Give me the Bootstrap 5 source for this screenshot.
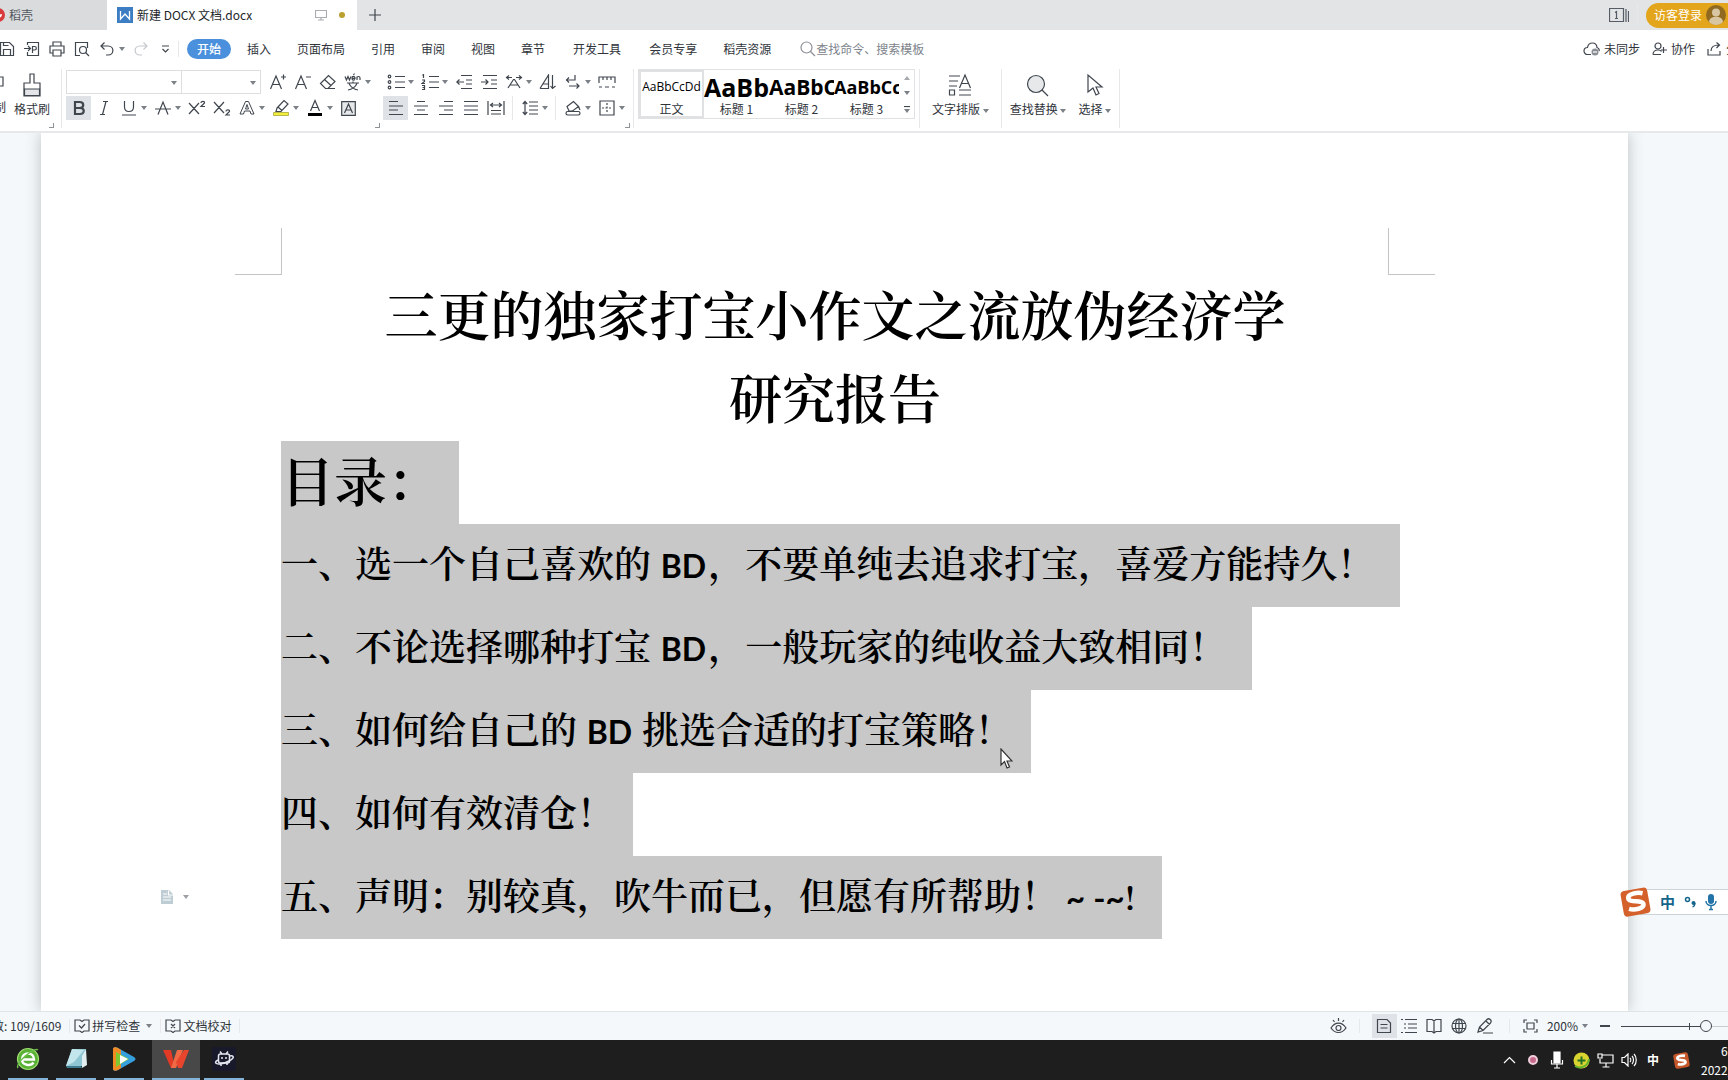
<!DOCTYPE html>
<html lang="zh-CN">
<head>
<meta charset="utf-8">
<meta name="viewport" content="width=device-width, initial-scale=1">
<title>新建 DOCX 文档.docx</title>
<link rel="stylesheet" href="https://cdn.jsdelivr.net/npm/bootstrap@5.3.0/dist/css/bootstrap.min.css">
<style>
body{font-family:"Noto Sans CJK SC",sans-serif;font-size:12px;line-height:18px;color:#2f343b;background:#f4f8fa}
svg{display:block;flex:none;fill:none;stroke:#40464e;stroke-width:1.2}
button{border:0;background:none;padding:0;color:inherit;flex:none}
a{color:inherit;text-decoration:none}
.tabstrip{height:30px;background:#e2e4e6}
.tab-home{width:107px;background:#d9dbdd;color:#53585f}
.tab-home svg{margin-left:-9px}
.tab-doc{width:250px;background:#fff;color:#22262b}
.dot-edit{width:6px;height:6px;background:#b9a02f;margin:0 12px}
.login{height:25px;background:#e3a51c;color:#fff;border-radius:13px 0 0 13px;width:82px}
.menurow{height:38px;background:#fff}
.quick{margin-left:-6px}
.menurow a{padding:0 13px;white-space:nowrap}
.menurow a.wide-link{padding:0 15px}
.menurow a.on{background:#4a90dc;color:#fff;border-radius:10px;padding:1px 10px;margin:0 3px 0 8px;font-weight:500}
.seek{border:0;outline:0;width:120px;padding:0;color:#7d838b;background:none}
.seek::placeholder{color:#7d838b;opacity:1}
.share{width:21px;overflow:hidden;white-space:nowrap}
.ic{width:25px;height:24px;display:flex;align-items:center;justify-content:center}
.ic.on{background:#dfe2e6}
.cr{width:9px;height:24px;display:flex;align-items:center}
.cr::after,.car::after{content:"";border:3px solid transparent;border-top:4px solid #7c8187;border-bottom:0}
.car{display:inline-flex;align-items:center;vertical-align:middle}
.vr1{width:1px;align-self:stretch;background:#e6e8ea;flex:none}
.ribbon{height:65px;background:#fff;border-bottom:2px solid #e6e8ea;padding:1px 0 3px}
.ribbon select{appearance:none;border:1px solid #dcdee0;background:#fff;height:24px;border-radius:0;padding:0;flex:none}
.ribbon .w-font{width:116px}
.ribbon .w-size{width:79px;border-left:0}
.pick{position:relative}
.pick::after{content:"";position:absolute;right:5px;top:11px;border:3px solid transparent;border-top:4px solid #7c8187;border-bottom:0;pointer-events:none}
.g-clip{width:57px}.g-font{width:321px}.g-para{width:250px}
.icon-row{padding:1px 0 2px}
.corner{position:absolute;right:3px;bottom:0;width:5px;height:5px;border:solid #8f9499;border-width:0 1px 1px 0}
.cutcol{width:6px;display:flex;flex-direction:column;align-items:flex-end;gap:9px;padding-top:6px;white-space:nowrap}
.gallery{border:1px solid #dfe1e3;height:50px;width:277px}
.sty{width:65px;height:48px;overflow:hidden;white-space:nowrap;display:flex;flex-direction:column;align-items:center;justify-content:flex-end}
.sty.on{box-shadow:inset 0 0 0 2px #dfe1e3}
.sty b,.sty i{font-style:normal;color:#000;align-self:stretch;overflow:hidden;text-align:left;line-height:26px;font-family:"Open Sans","Noto Sans",sans-serif}
.sty i{text-align:center}
.h-a{font-size:25px}.h-b{font-size:21px}.h-c{font-size:18px}
.big{display:flex;flex-direction:column;align-items:center;gap:3px;white-space:nowrap}
.workarea{min-height:0;overflow:hidden;position:relative}
.sheet{background:#fff;margin:0 100px 0 41px;height:100%;padding-top:95px;box-shadow:0 0 14px rgba(60,70,80,.3)}
.marks{padding:0 193px 0 194px}
.mk{width:47px;height:47px;border:solid #c2c4c6;border-width:0 1px 1px 0}
.mk.r{border-width:0 0 1px 1px}
.doc-text{padding:0 239px 0 240px;color:#000;font-family:"Noto Serif CJK SC","Noto Sans CJK SC",serif;font-size:37px;font-weight:600}
.doc-text h1{font-size:53px;line-height:83px;margin:-3px 0 3px;font-weight:600}
.doc-text h2{font-size:53px;margin:0;font-weight:600}
.doc-text p{margin:0}
.doc-text .sel{background:#c8c8c8;width:fit-content;padding:0 19px 6px 0;line-height:77px;white-space:nowrap}
.doc-text p.long{padding-right:26px}
.lat{font-family:Lato,sans-serif;font-size:32px;line-height:1;font-weight:700;margin:0 2px}
.tilde{font-family:Lato,sans-serif;font-size:33px;line-height:1;font-weight:700;margin-left:8px}
.bang{font-size:33px;line-height:1}
.para-tip{position:absolute;left:160px;top:756px;display:flex;gap:9px;opacity:.75}
.pointer{position:absolute;left:1000px;top:615px}
.ime{position:absolute;right:0;top:756px;height:26px;width:88px;background:#fff;border:solid #ccd4da;border-width:1px 0}
.ime svg.logo{margin-left:-20px}
.ime b{color:#17658a;font-size:15px}
.statusbar{height:29px;background:#f4f8fa;border-top:1px solid #dfe4e7}
.statusbar .vr1{height:14px;align-self:center}
.words{margin-left:-8px;white-space:nowrap}
.chk{display:flex;align-items:center;gap:2px}
.zoomer{appearance:none;width:140px;height:16px;margin:0 -33px 0 0;background:linear-gradient(#40464e,#40464e) 68px 5px/1px 7px no-repeat,linear-gradient(90deg,#40464e 80px,#c8ccd0 80px) 0 8px/100% 1px no-repeat;flex:none}
.zoomer::-webkit-slider-thumb{appearance:none;width:12px;height:12px;border:1px solid #40464e;border-radius:50%;background:#f4f8fa}
.taskbar{height:40px;background:#1e1e1e;color:#fff}
.app{width:40px;height:40px;border-bottom:2px solid #84b4d8;display:flex;align-items:center;justify-content:center}
.app.on{width:48px;background:#484848}
.tray .ic{width:24px}
.taskbar .tray svg{stroke:#fff}
.clock{width:27px;white-space:nowrap;line-height:19px}
</style>
<script src="https://cdn.jsdelivr.net/npm/bootstrap@5.3.0/dist/js/bootstrap.bundle.min.js"></script>
</head>
<body class="vh-100 d-flex flex-column overflow-hidden">

<header class="flex-shrink-0">
  <div class="tabstrip d-flex align-items-stretch">
    <div class="tab-home d-flex align-items-center overflow-hidden">
      <svg width="14" height="14" viewBox="0 0 14 14"><circle cx="7" cy="7" r="7" fill="#d8393c" stroke="none"/><path d="M7 10c3 0 4-2 4-4-2 0-3 1-4 4z" fill="#fff" stroke="none"/></svg>
      <span class="ms-1">稻壳</span>
    </div>
    <div class="tab-doc d-flex align-items-center">
      <svg class="ms-2 me-1" width="18" height="16" viewBox="0 0 18 16"><path d="M2 0h16v16H2z" fill="#3d7dc4" stroke="none"/><path d="M5.500 4v8l4.500-5 4.500 5V4" stroke="#fff" stroke-width="1.300"/></svg>
      <span>新建 DOCX 文档.docx</span>
      <svg class="ms-auto" width="12" height="12" viewBox="0 0 12 12" stroke-width="1"><path d="M.5 1.500h11v7H.5zM6 8.500v2M3 11h6" stroke="#a9adb2"/></svg>
      <span class="dot-edit rounded-circle"></span>
    </div>
    <button class="px-2 ms-1" aria-label="新建标签"><svg width="12" height="12" viewBox="0 0 12 12" stroke-width="1.600"><path d="M6 0v12M0 6h12"/></svg></button>
    <div class="ms-auto d-flex align-items-center">
      <button aria-label="窗口"><svg width="20" height="14" viewBox="0 0 20 14"><path d="M.5.5h14v13H.5zM17 1v13M19.500 3v11M6 4.500 7.500 3.500v7M6 10.500h3" stroke="#555c66"/></svg></button>
      <span class="vr1 mx-2 my-1"></span>
      <button class="login d-flex align-items-center overflow-hidden">
        <span class="ms-2 me-1">访客登录</span>
        <svg width="20" height="20" viewBox="0 0 20 20"><g stroke="none"><circle cx="10" cy="10" r="10" fill="#8f6a20"/><circle cx="10" cy="7.500" r="4" fill="#d8c6a2"/><path d="M3 17c0-7 14-7 14 0-4 4-10 4-14 0z" fill="#d8c6a2"/></g></svg>
      </button>
    </div>
  </div>

  <nav class="menurow d-flex align-items-center">
    <div class="quick d-flex align-items-center">
      <button class="ic" aria-label="保存"><svg width="16" height="16" viewBox="0 0 16 16"><path d="M1.500 1.500h9l4 4v9h-13zM4.500 14.500v-6h7v6M4.500 1.500v3h5"/></svg></button>
      <button class="ic" aria-label="输出为PDF"><svg width="16" height="16" viewBox="0 0 16 16"><path d="M3.500 4V1.500h11v13h-11V11M0 7.500h6M4 5l2.500 2.500L4 10M8.500 12V5.500h2c2.500 0 2.500 3.500 0 3.500h-2"/></svg></button>
      <button class="ic" aria-label="打印"><svg width="16" height="16" viewBox="0 0 16 16"><path d="M4 5V1h8v4M4 12H1V5h14v7h-3M4 9h8v6H4z"/></svg></button>
      <button class="ic" aria-label="打印预览"><svg width="16" height="16" viewBox="0 0 16 16"><path d="M6 14.500H1.500v-13h12V7"/><circle cx="9" cy="9" r="3.500"/><path d="m11.500 11.500 3.500 3.500"/></svg></button>
      <button class="ic" aria-label="撤销"><svg width="16" height="16" viewBox="0 0 16 16"><path d="M5.500 1.500 2 5l3.500 3.500M2 5h7c6.500 0 6.500 9 0 9H7"/></svg></button>
      <button class="cr" aria-label="撤销列表"></button>
      <button class="ic" aria-label="恢复"><svg width="16" height="16" viewBox="0 0 16 16"><path d="M10.500 1.500 14 5l-3.500 3.500M14 5H7c-6.500 0-6.500 9 0 9h2" stroke="#c5c8cc"/></svg></button>
      <button class="ic" aria-label="自定义"><svg width="9" height="9" viewBox="0 0 9 9"><path d="M1 1h7M1.500 4l3 3 3-3"/></svg></button>
      <span class="vr1 my-1"></span>
    </div>
    <a href="#" class="on">开始</a><a href="#">插入</a><a href="#">页面布局</a><a href="#">引用</a><a href="#">审阅</a><a href="#">视图</a><a href="#">章节</a><a href="#" class="wide-link">开发工具</a><a href="#">会员专享</a><a href="#">稻壳资源</a>
    <label class="d-flex align-items-center ms-3">
      <svg width="16" height="16" viewBox="0 0 16 16"><circle cx="6.500" cy="6.500" r="5.500" stroke="#8b9096"/><path d="m10.500 10.500 4.500 4.500" stroke="#8b9096"/></svg>
      <input class="seek" type="text" placeholder="查找命令、搜索模板" aria-label="查找命令">
    </label>
    <div class="ms-auto d-flex align-items-center overflow-hidden">
      <button class="d-flex align-items-center gap-1 me-2"><svg width="17" height="14" viewBox="0 0 17 14"><path d="M8 12.500H4.500a3.500 3.500 0 0 1 0-7C5.500-.5 13.500-.5 14 5.500c1.500.5 2.500 2 2 3.500"/><circle cx="12" cy="10" r="3.500" fill="#8b9096" stroke="none"/><path d="M10 10h4" stroke="#fff"/></svg>未同步</button>
      <button class="d-flex align-items-center gap-1 me-2 ms-1"><svg width="15" height="14" viewBox="0 0 15 14"><circle cx="6" cy="4" r="3"/><path d="M1 12.500c0-3 2-4.500 5-4.500 2 0 3 .5 3.500 1.500M1 12.500h8M11.500 5v6M9 8h6"/></svg>协作</button>
      <button class="share d-flex align-items-center gap-1 ms-1"><svg width="15" height="14" viewBox="0 0 15 14"><path d="M1 7v6h12V9M4 9c0-4 3-6 8-6M9.500.5 12.500 3l-3 3"/></svg>分享</button>
    </div>
  </nav>

  <div class="ribbon d-flex">
    <div class="g-clip d-flex align-items-start overflow-hidden position-relative">
      <div class="cutcol"><svg width="10" height="14" viewBox="0 0 10 14"><path d="M0 2h7v9H3"/></svg><span>制</span></div>
      <button class="big mx-2 pt-1"><svg width="20" height="24" viewBox="0 0 20 24"><path d="M8 1h4v9h6v13H2V10h6z"/><path d="M2.500 16h15v6.500h-15z" fill="#e3e5e8"/></svg>格式刷</button>
      <span class="corner"></span>
    </div>
    <span class="vr1 ms-1"></span>
    <div class="g-font position-relative ps-1">
      <div class="icon-row d-flex">
        <span class="pick"><select class="w-font" aria-label="字体"><option></option></select></span><span class="pick me-1"><select class="w-size" aria-label="字号"><option></option></select></span>
        <button class="ic" aria-label="增大字号"><svg width="18" height="18" viewBox="0 0 18 18"><path d="M1.500 16 7 3l5.500 13M3.500 11.500h7M12 4h5M14.500 1.500v5"/></svg></button>
        <button class="ic" aria-label="减小字号"><svg width="18" height="18" viewBox="0 0 18 18"><path d="M1.500 16 7 3l5.500 13M3.500 11.500h7M12 4h5"/></svg></button>
        <button class="ic" aria-label="清除格式"><svg width="18" height="18" viewBox="0 0 18 18"><path d="m1.500 10.500 8-8 6.500 6-7 7H6.500zM5.500 6.500l6.500 6M7 15.500h9"/></svg></button>
        <button class="ic" aria-label="拼音指南"><svg width="18" height="18" viewBox="0 0 18 18"><path d="M1 3.500 2.500 7 4 3.500 5.500 7 7 3.500M8 5.300h3c0-2.500-3-2.500-3 0s2 2 3 1.300M9.500 2l1-1.500M13 7V3.500M13 5c0-2 3-2 3 0v2M3 10h12M9 8.500V10M5 10.500c2 4 5 6 9 6.500M13 10.500c-2 4-5 6-9 6.500"/></svg></button>
        <button class="cr" aria-label="更多"></button>
      </div>
      <div class="d-flex">
        <button class="ic on" aria-label="加粗"><svg width="14" height="16" viewBox="0 0 14 16"><path d="M3 2h4.500c5 0 5 6 0 6H3zM3 8h5c5 0 5 6 0 6H3z" stroke-width="2.200"/></svg></button>
        <button class="ic" aria-label="倾斜"><svg width="14" height="16" viewBox="0 0 14 16"><path d="M6 1.500h5M3 14.500h5M9 1.500 5.500 14.500"/></svg></button>
        <button class="ic" aria-label="下划线"><svg width="16" height="16" viewBox="0 0 16 16"><path d="M3.500 1v6c0 6 9 6 9 0V1M1 15h14"/></svg></button><button class="cr" aria-label="更多"></button>
        <button class="ic" aria-label="删除线"><svg width="16" height="16" viewBox="0 0 16 16"><path d="M3 14.500 8 2l5 12.500M0 9h16"/></svg></button><button class="cr" aria-label="更多"></button>
        <button class="ic" aria-label="上标"><svg width="18" height="16" viewBox="0 0 18 16"><path d="m1 3 10 11M11 3 1 14M13 3c0-2.500 4-2 3.500 0L13 6.500h4"/></svg></button>
        <button class="ic" aria-label="下标"><svg width="18" height="16" viewBox="0 0 18 16"><path d="m1 2 10 11M11 2 1 13M13 11.500c0-2.500 4-2 3.500 0L13 15h4"/></svg></button>
        <button class="ic" aria-label="文字效果"><svg width="16" height="16" viewBox="0 0 16 16"><path d="M1 14 6.500 1.500h3L15 14h-3l-1-3H5.500l-1 3zM8 4.500 6.500 9h3z" stroke-width="1"/></svg></button><button class="cr" aria-label="更多"></button>
        <button class="ic" aria-label="突出显示"><svg width="18" height="18" viewBox="0 0 18 18"><path d="M1.500 13.500h15v3h-15z" fill="#f2ee3c" stroke="#a8a43a" stroke-width=".8"/><path d="m5 9 7-7.500 4 3.500-7 7.500H4zM6 8l4 3.500"/></svg></button><button class="cr" aria-label="更多"></button>
        <button class="ic" aria-label="字体颜色"><svg width="16" height="18" viewBox="0 0 16 18"><path d="M3.500 12 8 1.500 12.500 12M5 8.500h6"/><path d="M1 15.500h14" stroke="#000" stroke-width="3"/></svg></button><button class="cr" aria-label="更多"></button>
        <button class="ic" aria-label="字符底纹"><svg width="15" height="15" viewBox="0 0 15 15"><path d="M.7.7h13.600v13.600H.7z" fill="#e6e8ea"/><path d="m3.500 12 4-9 4 9M5 9h5"/></svg></button>
      </div>
      <span class="corner"></span>
    </div>
    <div class="g-para position-relative">
      <div class="icon-row d-flex">
        <button class="ic" aria-label="项目符号"><svg width="18" height="16" viewBox="0 0 18 16"><path d="M8 2.500h10M8 8h10M8 13.500h10"/><circle cx="2.500" cy="2.500" r="1.300"/><circle cx="2.500" cy="8" r="1.300"/><circle cx="2.500" cy="13.500" r="1.300"/></svg></button><button class="cr" aria-label="更多"></button>
        <button class="ic" aria-label="编号"><svg width="18" height="16" viewBox="0 0 18 16"><path d="M8 2.500h10M8 8h10M8 13.500h10M1.500 1.500 2.500.5V4M1 6h2.500v1.500L1 9.500h3M1 11.500h2.500v4H1M1.500 13.500h2"/></svg></button><button class="cr" aria-label="更多"></button>
        <button class="ic" aria-label="减少缩进"><svg width="16" height="16" viewBox="0 0 16 16"><path d="M5 1.500h11M10 6h6M10 10h6M5 14.500h11M8 8H.8M3.500 5.500.8 8l2.700 2.500"/></svg></button>
        <button class="ic" aria-label="增加缩进"><svg width="16" height="16" viewBox="0 0 16 16"><path d="M2 1.500h14M10 6h6M10 10h6M2 14.500h14M0 8h7M4.500 5.500 7 8l-2.500 2.500"/></svg></button>
        <button class="ic" aria-label="中文版式"><svg width="18" height="16" viewBox="0 0 18 16"><path d="m3 14 5.500-8.500h1L15 14M5 11h8M2 3.500h5M4 1.500l-2.500 2 2.500 2M11 3.500h5M14 1.500l2.500 2-2.500 2"/></svg></button><button class="cr" aria-label="更多"></button>
        <button class="ic" aria-label="排序"><svg width="18" height="16" viewBox="0 0 18 16"><path d="M1 14.500 9.500 1v13.500H1M4 10h5.500M13.500 1v13.500M11.500 12l2 2.500 3-2.500"/></svg></button>
        <button class="ic" aria-label="换行"><svg width="16" height="16" viewBox="0 0 16 16"><path d="M10 1v5H1.500M4 3.500 1.500 6 4 8.500M4 12h10M11.500 9.500 14 12l-2.500 2.500"/></svg></button><button class="cr" aria-label="更多"></button>
        <button class="ic" aria-label="制表位"><svg width="18" height="14" viewBox="0 0 18 14"><path d="M1 8V2h16v6M5 2v3M9 2v3M13 2v3M1 12h3M7 12h4M14 12h3"/></svg></button>
      </div>
      <div class="d-flex">
        <button class="ic on" aria-label="左对齐"><svg width="16" height="16" viewBox="0 0 16 16"><path d="M1 1.500h9M1 6h14M1 10h9M1 14.500h14"/></svg></button>
        <button class="ic" aria-label="居中"><svg width="16" height="16" viewBox="0 0 16 16"><path d="M4 1.500h8M1 6h14M4 10h8M1 14.500h14"/></svg></button>
        <button class="ic" aria-label="右对齐"><svg width="16" height="16" viewBox="0 0 16 16"><path d="M6 1.500h9M1 6h14M6 10h9M1 14.500h14"/></svg></button>
        <button class="ic" aria-label="两端对齐"><svg width="16" height="16" viewBox="0 0 16 16"><path d="M1 1.500h14M1 6h14M1 10h14M1 14.500h14"/></svg></button>
        <button class="ic" aria-label="分散对齐"><svg width="18" height="16" viewBox="0 0 18 16"><path d="M1 1v14M17 1v14M4 5h10M6 3 3.500 5 6 7M12 3l2.500 2L12 7M4 10.500h10M4 14h10"/></svg></button>
        <span class="vr1 ms-1 me-1"></span>
        <button class="ic" aria-label="行距"><svg width="16" height="16" viewBox="0 0 16 16"><path d="M7 2h9M7 6h9M7 10h9M7 14h9M3 1.500v13M.8 4 3 1.500 5.200 4M.8 12 3 14.500 5.200 12"/></svg></button><button class="cr" aria-label="更多"></button>
        <span class="vr1 ms-1 me-1"></span>
        <button class="ic" aria-label="底纹"><svg width="16" height="16" viewBox="0 0 16 16"><path d="m2 6.500 6.500-5 5 5-6 4.500H4zM13.500 6.500l1.500 3.500"/><rect x="1" y="11.500" width="14" height="3.500" rx="1.700"/></svg></button><button class="cr" aria-label="更多"></button>
        <button class="ic" aria-label="边框"><svg width="16" height="16" viewBox="0 0 16 16"><path d="M1 1h14v14H1z"/><path d="M8 3v10M3 8h10" stroke-dasharray="2 1.500"/></svg></button><button class="cr" aria-label="更多"></button>
      </div>
      <span class="corner"></span>
    </div>
    <span class="vr1 me-1"></span>
    <div class="gallery d-flex">
      <button class="sty on"><i>AaBbCcDd</i>正文</button>
      <button class="sty"><b class="h-a">AaBb</b>标题 1</button>
      <button class="sty"><b class="h-b">AaBbC</b>标题 2</button>
      <button class="sty"><b class="h-c">AaBbCc</b>标题 3</button>
      <div class="d-flex flex-column align-items-center justify-content-around flex-fill"><svg width="6" height="4"><path d="M0 4 3 0l3 4z" fill="#a5a9ae" stroke="none"/></svg><span class="car"></span><svg width="6" height="7"><path d="M0 .5h6" /><path d="M0 3h6L3 7z" fill="#7c8187" stroke="none"/></svg></div>
    </div>
    <span class="vr1 ms-1 me-2"></span>
    <button class="big px-1 pt-1 align-self-start"><svg width="26" height="24" viewBox="0 0 26 24"><path d="M2 3h11M2 8h9M2 13h8M2.500 17h5v5h-5zM12 22h12M12 17h12M12.500 15 18 2l5.500 13M14.500 10.500h7"/></svg><span>文字排版 <i class="car"></i></span></button>
    <span class="vr1 ms-2"></span>
    <button class="big ms-2 pt-1 align-self-start"><svg width="26" height="24" viewBox="0 0 26 24"><circle cx="11" cy="11" r="8.500" fill="#e6e8ea"/><path d="m17 17 6 6"/></svg><span>查找替换 <i class="car"></i></span></button>
    <button class="big ms-2 pt-1 ps-1 align-self-start"><svg width="18" height="24" viewBox="0 0 18 24"><path d="M2 2v17l5-4 3 7 3-1.500-3-6.500h6z"/></svg><span>选择 <i class="car"></i></span></button>
    <span class="vr1 ms-2"></span>
  </div>
</header>

<main class="workarea flex-fill">
  <article class="sheet">
    <div class="marks d-flex justify-content-between"><span class="mk"></span><span class="mk r"></span></div>
    <div class="doc-text">
      <h1 class="text-center">三更的独家打宝小作文之流放伪经济学<br>研究报告</h1>
      <h2 class="sel">目录：</h2>
      <p class="sel long">一、选一个自己喜欢的<span class="lat"> BD</span>，不要单纯去追求打宝，喜爱方能持久！</p>
      <p class="sel long">二、不论选择哪种打宝<span class="lat"> BD</span>，一般玩家的纯收益大致相同！</p>
      <p class="sel">三、如何给自己的<span class="lat"> BD </span>挑选合适的打宝策略！</p>
      <p class="sel">四、如何有效清仓！</p>
      <p class="sel long">五、声明：别较真，吹牛而已，但愿有所帮助！<span class="tilde">~ -~</span><span class="bang">!</span></p>
    </div>
  </article>
  <div class="para-tip"><svg width="14" height="16" viewBox="0 0 14 16"><path d="M1 1h8l4 4v10H1z" fill="#a9bcc6" stroke="none"/><path d="M3 5h4M3 8h8M3 11h8M8.500 1.500V6H13" stroke="#fff"/></svg><span class="car"></span></div>
  <svg class="pointer" width="13" height="21" viewBox="0 0 13 21"><path d="M1 1v16l3.500-3.500L7 20l2.500-1-2.500-6h5z" fill="#fff" stroke="#333"/></svg>
  <div class="ime d-flex align-items-center">
    <svg class="logo" width="32" height="32" viewBox="0 0 32 32"><g transform="rotate(-10 16 16)"><rect x="2" y="3" width="27" height="26" rx="4" fill="#d4602b" stroke="none"/><path d="M24 8.500c-5-2-15-2-15 2.500 0 5 14 3.500 14 8.500 0 4.500-10 4.500-15 2" stroke="#fff" stroke-width="4.500"/></g></svg>
    <b class="ms-2">中</b>
    <svg class="ms-2 me-2" width="14" height="14" viewBox="0 0 14 14"><circle cx="4.500" cy="4.500" r="2" stroke="#17658a" stroke-width="1.500"/><circle cx="10.500" cy="8" r="2" fill="#17658a" stroke="none"/><path d="M12 8c0 2-1 3.500-2.500 4" stroke="#17658a"/></svg>
    <svg width="12" height="17" viewBox="0 0 12 17"><rect x="3" y="0" width="6" height="10" rx="3" fill="#2273a8" stroke="none"/><path d="M1 7c0 6 10 6 10 0M6 11.500V15M4 15.500h4" stroke="#2273a8" stroke-width="1.500"/></svg>
  </div>
</main>

<footer class="flex-shrink-0">
  <div class="statusbar d-flex align-items-center overflow-hidden">
    <span class="words">数: 109/1609</span>
    <span class="vr1 ms-2 me-1"></span>
    <button class="chk"><svg width="16" height="14" viewBox="0 0 16 14"><path d="M6 1H1v11h5l2 1.500L10 12h5V1h-5L8 2.500zM5 6.500 7.500 9 11 5"/></svg>拼写检查<span class="car ms-1"></span></button>
    <span class="vr1 ms-2 me-1"></span>
    <button class="chk"><svg width="16" height="14" viewBox="0 0 16 14"><path d="M6 1H1v11h5l2 1.500L10 12h5V1h-5L8 2.500zM6 5l4 4M10 5 6 9"/></svg>文档校对</button>
    <span class="vr1 ms-2"></span>
    <div class="ms-auto d-flex align-items-center">
      <button class="ic" aria-label="护眼模式"><svg width="17" height="16" viewBox="0 0 17 16"><path d="M1 10c4-6.500 11-6.500 15 0-4 6-11 6-15 0zM8.500 0v3M3 2l1.500 2M14 2l-1.500 2"/><circle cx="8.500" cy="10" r="2.500"/></svg></button>
      <span class="vr1 mx-2"></span>
      <button class="ic on ms-1" aria-label="页面视图"><svg width="16" height="16" viewBox="0 0 16 16"><path d="M1.500 1.500H11l3.500 3.500v9.500h-13zM4.500 6.500h7M4.500 10h7"/></svg></button>
      <button class="ic" aria-label="大纲"><svg width="16" height="16" viewBox="0 0 16 16"><path d="M4 1.500h12M7 6h9M7 10h9M4 14.500h12M0 1.500h2M3 6h2M3 10h2M0 14.500h2"/></svg></button>
      <button class="ic" aria-label="阅读版式"><svg width="16" height="16" viewBox="0 0 16 16"><path d="M6 1.500H1v12h5l2 1.500 2-1.500h5v-12h-5L8 3zM8 3v12"/></svg></button>
      <button class="ic" aria-label="Web版式"><svg width="16" height="16" viewBox="0 0 16 16"><circle cx="8" cy="8" r="7"/><ellipse cx="8" cy="8" rx="3.500" ry="7"/><path d="M1.500 5.500h13M1.500 10.500h13M8 1v14"/></svg></button>
      <button class="ic me-1" aria-label="写作模式"><svg width="17" height="16" viewBox="0 0 17 16"><path d="M2 14 3.500 9 11 1.500c2-2 5.500 1 3.500 3.500L7 12.500zM3.500 9 7 12.500M7 15h10M10 3l3.500 3.500"/></svg></button>
      <span class="vr1 mx-2"></span>
      <button class="ic" aria-label="适应窗口"><svg width="15" height="14" viewBox="0 0 15 14"><path d="M1 4V1h3M11 1h3v3M14 10v3h-3M4 13H1v-3M4 4h7v6H4z"/></svg></button>
      <button class="d-flex align-items-center ms-1">200%<span class="car ms-1"></span></button>
      <button class="ic ms-1" aria-label="缩小"><svg width="10" height="4" viewBox="0 0 10 4"><path d="M0 2h10" stroke-width="2"/></svg></button>
      <input class="zoomer ms-1" type="range" min="0" max="100" value="62" aria-label="显示比例">
    </div>
  </div>

  <div class="taskbar d-flex align-items-center overflow-hidden">
    <div class="d-flex ms-2">
      <button class="app" aria-label="浏览器"><svg width="24" height="24" viewBox="0 0 24 24"><circle cx="12" cy="12" r="10.500" fill="#58b135" stroke="#9fdd70"/><path d="M6 12.500h12c0-8-12-8-12 0 0 6 9 7 11.500 3" stroke="#fff" stroke-width="2.400"/><path d="M2 21C-1 16 18 0 22 3" stroke="#6cc04a" stroke-width="1.500"/></svg></button>
      <button class="app ms-2" aria-label="记事本"><svg width="24" height="24" viewBox="0 0 24 24"><g stroke="none"><path d="M8 2h14l-4 17H2z" fill="#8fc6d4"/><path d="m8 2-6 17 8-4L20 3z" fill="#c3e6ec"/><path d="m22 2 1 16-5 3V9z" fill="#e2eef0"/><path d="m2 19 1 2h15l-1-2z" fill="#3e7b8e"/></g></svg></button>
      <button class="app ms-2 me-1" aria-label="视频"><svg width="26" height="24" viewBox="0 0 26 24"><g stroke="none"><path d="M2 2c0-2 3-2 5-1l16 9c2 1 2 3 0 4L7 23c-2 1-5 1-5-1z" fill="#36a0df"/><path d="M2 2c0-2 3-2 5-1l3 2v18l-3 2c-2 1-5 1-5-1z" fill="#f28a22"/><path d="m5 5 13 7-13 8z" fill="#7cc934"/><path d="m9 8 8 4-8 5z" fill="#fff"/></g></svg></button>
      <button class="app on ms-1" aria-label="WPS"><svg width="26" height="22" viewBox="0 0 26 22"><g stroke="none"><path d="M0 2h8l4 18H8z" fill="#e33a25"/><path d="M14 2h6l-7 18H8z" fill="#f26a45"/><path d="M21 2h5l-7 18h-4l-2-6z" fill="#e8452c"/></g></svg></button>
      <button class="app ms-1" aria-label="直播姬"><svg width="24" height="24" viewBox="0 0 24 24"><rect width="24" height="24" rx="3" fill="#18192a" stroke="none"/><g stroke="#e6e8f2" stroke-width="1.500"><rect x="6.500" y="7" width="11" height="9" rx="2"/><path d="M8 4.500 10 7M16 4.500 14 7M10 10v2M14 10v2M6 13c-7 4 2 6 11 1 6-3 5-6 1-5M9 16v3M15 16v2"/></g></svg></button>
    </div>
    <div class="tray ms-auto d-flex align-items-center">
      <button class="ic" aria-label="显示隐藏图标"><svg width="13" height="8" viewBox="0 0 13 8" stroke-width="1.500"><path d="m1 7 5.500-5.500L12 7"/></svg></button>
      <button class="ic" aria-label="录制"><svg width="12" height="12" viewBox="0 0 12 12"><circle cx="6" cy="6" r="4" fill="#c66b8b" stroke="#f0cfda" stroke-width="2"/></svg></button>
      <button class="ic" aria-label="麦克风"><svg width="14" height="18" viewBox="0 0 14 18"><path d="M4 1h6v11H4z" fill="#fff"/><path d="M1.500 9v4h11V9M7 13v4M4 17h6"/></svg></button>
      <button class="ic" aria-label="安全"><svg width="17" height="17" viewBox="0 0 17 17"><circle cx="8.500" cy="8.500" r="8" fill="#d9d430" stroke="none"/><path d="M2 14c5 3 13 1 14-7" stroke="#61b22d" stroke-width="2"/><path d="M8.500 4.500v8M4.500 8.500h8" stroke="#247025" stroke-width="2"/></svg></button>
      <button class="ic" aria-label="网络"><svg width="17" height="15" viewBox="0 0 17 15"><path d="M5 2h11v8H3V6M1 1h4v4H1zM9 10v4M5.500 14h7"/></svg></button>
      <button class="ic" aria-label="音量"><svg width="16" height="14" viewBox="0 0 16 14"><path d="M1 4.500h2.500L7 1v12L3.500 9.500H1zM9 5c1 1 1 3 0 4M11 3c2 2 2 6 0 8M13 1c3 3 3 9 0 12"/></svg></button>
      <button class="ic fw-bold" aria-label="输入法">中</button>
      <button class="ic mx-1" aria-label="搜狗"><svg width="17" height="17" viewBox="0 0 32 32"><g transform="rotate(-10 16 16)"><rect x="2" y="2" width="28" height="28" rx="5" fill="#c5572b" stroke="none"/><path d="M24 8.500c-5-2-15-2-15 2.500 0 5 14 3.500 14 8.500 0 4.500-10 4.500-15 2" stroke="#fff" stroke-width="5"/></g></svg></button>
      <div class="clock ms-1"><div class="ps-3 ms-1">6:18</div><div>2022/6/3</div></div>
    </div>
  </div>
</footer>
</body>
</html>
